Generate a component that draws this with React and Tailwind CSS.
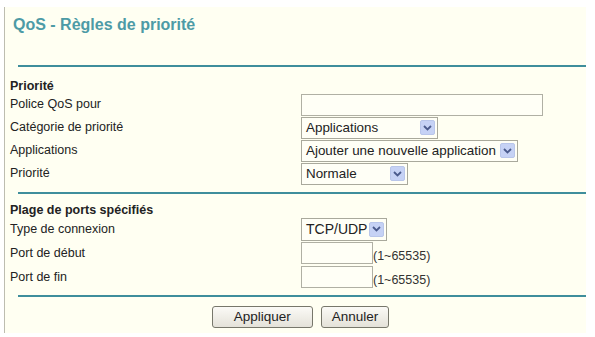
import React from "react";

function Chevron() {
  return (
    <span className="flex h-[15px] w-[15px] items-center justify-center rounded-[2px] border border-[#b9c6ea] bg-[#c6d2f5]">
      <svg width="9" height="6" viewBox="0 0 9 6">
        <path d="M1 1 L4.5 4.5 L8 1" fill="none" stroke="#4a5a8c" strokeWidth="1.8" />
      </svg>
    </span>
  );
}

function Select({ value, width, tall }) {
  return (
    <div
      className={`flex items-center justify-between border border-[#a9a99c] bg-[#fffff6] pl-[4px] pr-[2px] ${tall ? "h-[23px] text-[14px]" : "h-[22px] text-[13.4px]"}`}
      style={{ width }}
    >
      <span className="text-[#222] leading-none">{value}</span>
      <Chevron />
    </div>
  );
}

function Input({ width, height }) {
  return <div className="border border-[#b0b0a4] bg-[#fffff6]" style={{ width, height }} />;
}

function Row({ label, children, h }) {
  return (
    <div className="grid grid-cols-[291px_1fr] items-center" style={{ height: h }}>
      <span className="text-[12.5px] text-[#222]">{label}</span>
      <div className="flex items-center">{children}</div>
    </div>
  );
}

function Rule() {
  return <div className="ml-[8px] h-[2px] bg-[#3f8e9c]" />;
}

export default function App() {
  return (
    <div className="h-[337px] w-[595px] bg-white pl-[4px] pt-[7px]" style={{ fontFamily: "'Liberation Sans', Arial, sans-serif" }}>
      <div className="h-[326px] w-[582px] border-l border-[#bdbdb0] bg-[#fffff2] pl-[5px]">
        <div className="pl-[3px] pt-[8px] text-[16px] font-bold leading-[20px] text-[#4d9ba6]">QoS - Règles de priorité</div>
        <div className="h-[30px]" />
        <Rule />
        <div className="pt-[12px]">
          <div className="text-[12.5px] font-bold leading-[14px] text-[#222]">Priorité</div>
          <Row label="Police QoS pour" h={23}>
            <Input width={242} height={22} />
          </Row>
          <Row label="Catégorie de priorité" h={23}>
            <Select value="Applications" width={137} />
          </Row>
          <Row label="Applications" h={23}>
            <Select value="Ajouter une nouvelle application" width={217} />
          </Row>
          <Row label="Priorité" h={23}>
            <Select value="Normale" width={107} />
          </Row>
        </div>
        <div className="h-[7px]" />
        <Rule />
        <div className="pt-[9px]">
          <div className="text-[12.5px] font-bold leading-[14px] text-[#222]">Plage de ports spécifiés</div>
          <Row label="Type de connexion" h={24}>
            <Select value="TCP/UDP" width={86} tall />
          </Row>
          <Row label="Port de début" h={24}>
            <Input width={72} height={22} />
            <span className="mt-[6px] text-[12.5px] text-[#333]">(1~65535)</span>
          </Row>
          <Row label="Port de fin" h={24}>
            <Input width={72} height={22} />
            <span className="mt-[6px] text-[12.5px] text-[#333]">(1~65535)</span>
          </Row>
        </div>
        <div className="h-[6px]" />
        <Rule />
        <div className="flex justify-center gap-[8px] pl-[5px] pt-[9px]">
          <button className="h-[22px] rounded-[3px] border border-[#77776b] bg-gradient-to-b from-[#fbfaf6] to-[#e4e2d9] px-[21px] text-[13.5px] text-[#222]">
            Appliquer
          </button>
          <button className="h-[22px] rounded-[3px] border border-[#77776b] bg-gradient-to-b from-[#fbfaf6] to-[#e4e2d9] px-[10px] text-[13.5px] text-[#222]">
            Annuler
          </button>
        </div>
      </div>
    </div>
  );
}
